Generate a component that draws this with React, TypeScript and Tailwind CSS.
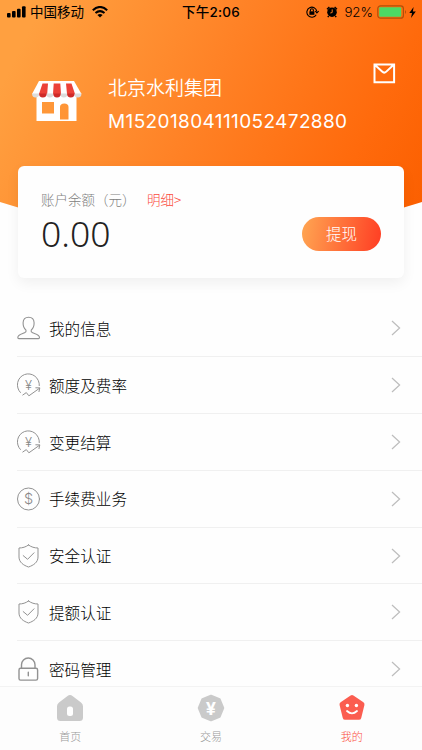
import type { ReactNode } from 'react';

const line = { fill: 'none', stroke: '#929292', strokeWidth: 1, strokeLinecap: 'round', strokeLinejoin: 'round' } as const;

function UserIcon() {
  return (
    <svg width="24" height="24" viewBox="0 0 24 24" {...line} strokeWidth={1.1}>
      <path d="M9 14.2C7.2 12.6 6 9.6 6.1 6.8C6.2 3.4 8.5 1.2 11.6 1.2S17 3.4 17.1 6.8C17.2 9.6 16 12.6 14.2 14.2C13.8 15.5 14.4 16.3 15.6 16.8C18.5 18 22.5 18.6 22.5 21.6Q22.5 22.6 21.5 22.6H1.8Q.8 22.6 .8 21.6C.8 18.6 4.8 18 7.6 16.8C8.8 16.3 9.4 15.5 9 14.2Z" />
    </svg>
  );
}

function RateIcon() {
  return (
    <svg width="24" height="24" viewBox="0 0 24 24" {...line}>
      <path d="M3.4 19.5A11 11 0 1 1 22.3 12.6M5.8 22L9.3 19.6L11.9 22.8L22.6 15.2M18.8 14.8L22.8 14.9L22 18.6" />
      <text x="11.5" y="16.5" textAnchor="middle" fontSize="13" fontFamily="Inter, sans-serif" fontWeight="300" fill="#888" stroke="none">¥</text>
    </svg>
  );
}

function DollarIcon() {
  return (
    <svg width="24" height="24" viewBox="0 0 24 24" {...line}>
      <circle cx="11.5" cy="12" r="11" />
      <text x="11.7" y="17.2" textAnchor="middle" fontSize="14.5" fontFamily="Inter, sans-serif" fontWeight="300" fill="#888" stroke="none">$</text>
    </svg>
  );
}

function ShieldIcon() {
  return (
    <svg width="24" height="24" viewBox="0 0 24 24" {...line}>
      <path d="M11.5 1C8.8 3 5.5 4 2 4V13C2 18.3 6.5 21.3 11.5 23C16.5 21.3 21 18.3 21 13V4C17.5 4 14.2 3 11.5 1Z" />
      <path d="M6.2 11.6L10.6 15.3L17 8.8" />
    </svg>
  );
}

function LockIcon() {
  return (
    <svg width="24" height="24" viewBox="0 0 24 24" {...line} strokeWidth={1.4}>
      <rect x="2" y="11.3" width="18.6" height="11.8" rx="1.6" />
      <path d="M4.5 11V7.7A6.7 6.7 0 0 1 18 7.7V11M11.3 15.3V18.7" />
    </svg>
  );
}

const menu: { label: string; icon: ReactNode }[] = [
  { label: '我的信息', icon: <UserIcon /> },
  { label: '额度及费率', icon: <RateIcon /> },
  { label: '变更结算', icon: <RateIcon /> },
  { label: '手续费业务', icon: <DollarIcon /> },
  { label: '安全认证', icon: <ShieldIcon /> },
  { label: '提额认证', icon: <ShieldIcon /> },
  { label: '密码管理', icon: <LockIcon /> },
];

function StatusBar() {
  return (
    <div className="grid h-6 grid-cols-[1fr_auto_1fr] items-center text-[13.5px] leading-6 text-black">
      <div className="flex items-center pl-[7px]">
        <svg width="19" height="12" viewBox="0 0 19 12">
          <rect x="0" y="7" width="3.6" height="4.5" rx="1" />
          <rect x="5" y="5" width="3.6" height="6.5" rx="1" />
          <rect x="10" y="2.7" width="3.6" height="8.8" rx="1" />
          <rect x="15" y="0.3" width="3.6" height="11.2" rx="1" />
        </svg>
        <span className="ml-1 h-6 leading-[23px]">中国移动</span>
        <svg className="ml-2" width="16" height="12" viewBox="0 0 16 12" fill="none" stroke="#000" strokeWidth="2.1">
          <path d="M.8 4.2Q8-2.2 15.2 4.2M3.5 7Q8 3.2 12.5 7" />
          <path d="M5.4 8.9Q8 6.9 10.6 8.9L8 11.6Z" fill="#000" stroke="none" />
        </svg>
      </div>
      <span className="font-['Inter','Noto_Sans_CJK_SC',sans-serif] text-[13.5px] font-medium tracking-[0.2px]">下午2:06</span>
      <div className="flex items-center justify-end pr-[6px]">
        <svg width="13" height="12" viewBox="0 0 13 12" fill="none" stroke="#000" strokeWidth="1.1">
          <path d="M10.2 8.7A5 5 0 1 1 10.8 5.4M9.2 5L10.9 6.9L12.6 5" />
          <rect x="3.4" y="5.3" width="5" height="3.5" fill="#000" stroke="none" />
          <path d="M4.4 5.5V4.3A1.5 1.5 0 0 1 7.4 4.3V5.5" />
        </svg>
        <svg className="ml-[7px]" width="12" height="12" viewBox="0 0 12 12">
          <circle cx="6" cy="6.2" r="4.8" />
          <path d="M1 3.2L3.4 1M8.6 1L11 3.2M2.7 10L1.8 11.2M9.3 10L10.2 11.2" stroke="#000" strokeWidth="1.4" />
          <path d="M6.2 3.4V6.5L4.3 7" stroke="#ff7c1c" fill="none" strokeWidth="1" />
        </svg>
        <span className="ml-[6px] font-['Inter',sans-serif] text-[13.3px] font-light">92%</span>
        <svg className="ml-1" width="30" height="14" viewBox="0 0 30 14">
          <rect x=".8" y=".8" width="25.6" height="12.4" rx="2.8" fill="none" stroke="#b0500a" strokeWidth="1.2" />
          <rect x="2.2" y="2.2" width="22" height="9.6" rx="1" fill="#4cd964" />
          <path d="M28 5Q30 7 28 9Z" fill="#b0500a" />
        </svg>
        <svg className="ml-[2px]" width="7" height="11" viewBox="0 0 7 11">
          <path d="M4.6 0L.3 6H3L2 11L6.8 4.5H3.9Z" />
        </svg>
      </div>
    </div>
  );
}

function ShopIcon() {
  return (
    <svg width="50" height="42" viewBox="0 0 50 42">
      <path d="M4.5 13H44.5V41H4.5ZM10 22V33.5H22V22ZM28 39.5H36.5V27Q36.5 23.5 32.3 23.5T28 27Z" fill="#fff" fillRule="evenodd" />
      <path d="M7 1H42L49.5 14H0Z" fill="#fff" />
      <path d="M10.5 3.5H16L15.2 14H7ZM21.7 3.5H28.3L29 14H21ZM34 3.5H39.5L43 14H35Z" fill="#ec4138" />
      <path d="M0 13.5H7.2A3.6 4 0 0 1 0 13.5M14.3 13.5H21.5A3.6 4 0 0 1 14.3 13.5M28.3 13.5H35.5A3.6 4 0 0 1 28.3 13.5M42.3 13.5H49.5A3.6 4 0 0 1 42.3 13.5" fill="#dcdcdc" />
      <path d="M7 13.5H14.7A3.85 4 0 0 1 7 13.5M21.2 13.5H28.8A3.8 4 0 0 1 21.2 13.5M35 13.5H42.6A3.8 4 0 0 1 35 13.5" fill="#cf2a28" />
    </svg>
  );
}

function Header() {
  return (
    <header className="h-[266px] bg-[linear-gradient(117deg,#ffa040_8%,#ff8226_45%,#ff6a0c_78%,#fb5f00_95%)] [clip-path:polygon(0_0,100%_0,100%_202px,50%_266px,0_202px)]">
      <StatusBar />
      <div className="flex items-start pt-[38px] pr-[26px] pl-8">
        <div className="mt-[18px]">
          <ShopIcon />
        </div>
        <div className="mt-[8px] ml-[26px] flex-1 text-white">
          <div className="text-[19px] leading-[34px] font-[350]">北京水利集团</div>
          <div className="font-['Inter',sans-serif] text-[19px] leading-[35px] tracking-[0.38px]">M15201804111052472880</div>
        </div>
        <svg className="mt-[1px]" width="23" height="21" viewBox="0 0 23 21" fill="none" stroke="#fff" strokeWidth="2">
          <path d="M1.5 1.5H21.1V19.3H1.5ZM2.3 2.3L9.1 8.6Q11.2 10.6 13.3 8.6L20.1 2.3" />
        </svg>
      </div>
    </header>
  );
}

function BalanceCard() {
  return (
    <section className="relative mx-[18px] -mt-[100.5px] flex h-28 rounded-md bg-[#fefefe] px-[23px] shadow-[0_5px_14px_rgba(0,0,0,0.06)]">
      <div className="flex-1 pt-[22px]">
        <div className="flex items-center text-[13.5px] leading-[22px] font-light">
          <span className="w-[95px] whitespace-nowrap text-[#808080]">账户余额（元）</span>
          <span className="ml-[11px] text-[#fb4a3c]">明细&gt;</span>
        </div>
        <div className="font-['Noto_Sans',sans-serif] text-[35.5px] leading-[47px] font-light text-[#222]">0.00</div>
      </div>
      <button className="mt-[51px] h-[34px] w-[79px] rounded-full bg-[linear-gradient(100deg,#ffa652,#ff3d23)] text-[15.5px] leading-[33px] font-light text-white">
        提现
      </button>
    </section>
  );
}

function TabBar() {
  return (
    <nav className="relative grid h-16 grid-cols-3 border-t border-[#f3f3f3] bg-[#fdfdfd] text-center text-[11px] leading-4 font-light text-[#999]">
      <div className="flex flex-col items-center pt-[7px]">
        <svg width="28" height="28" viewBox="0 0 28 28">
          <path d="M11.5 2Q14 .2 16.5 2L25 8.4Q27 9.8 27 12.2V23.5Q27 27 23.5 27H4.5Q1 27 1 23.5V12.2Q1 9.8 3 8.4Z" fill="#cacaca" />
          <rect x="11" y="12.5" width="6" height="9.5" rx="2.5" fill="#fff" />
        </svg>
        <span className="mt-[6px]">首页</span>
      </div>
      <div className="flex flex-col items-center pt-[7px]">
        <svg width="28" height="28" viewBox="0 0 28 28">
          <path d="M14 2L22.5 5.5L26 14L22.5 22.5L14 26L5.5 22.5L2 14L5.5 5.5Z" fill="#cacaca" stroke="#cacaca" strokeWidth="2.5" strokeLinejoin="round" />
          <text x="14" y="20.5" textAnchor="middle" fontFamily="Inter, sans-serif" fontWeight="700" fontSize="18" fill="#fff">¥</text>
        </svg>
        <span className="mt-[6px]">交易</span>
      </div>
      <div className="flex flex-col items-center pt-[7px] text-[#fb4d40]">
        <svg width="28" height="28" viewBox="0 0 28 28">
          <path d="M14 3.5L24 10.3L20.8 23.3H7.2L4 10.3Z" fill="#fb5d50" stroke="#fb5d50" strokeWidth="5" strokeLinejoin="round" />
          <circle cx="9.4" cy="11.5" r="1.7" fill="#fff" />
          <circle cx="18.4" cy="11.5" r="1.7" fill="#fff" />
          <path d="M9 17Q14 21.7 19 17" fill="none" stroke="#fff" strokeWidth="1.8" strokeLinecap="round" />
        </svg>
        <span className="mt-[6px]">我的</span>
      </div>
    </nav>
  );
}

export default function App() {
  return (
    <div className="flex h-[750px] w-[422px] flex-col overflow-hidden bg-[#fefefe] font-['Noto_Sans_CJK_SC',sans-serif]">
      <Header />
      <BalanceCard />
      <ul className="mt-[22.5px] min-h-0 flex-1 overflow-hidden pl-[17px]">
        {menu.map(item => (
          <li key={item.label} className="flex h-[56.9px] items-center border-b border-[#f0f0f0] pr-[21px]">
            {item.icon}
            <span className="ml-2 flex-1 pt-px text-[15.6px] font-light text-black">{item.label}</span>
            <svg width="10" height="16" viewBox="0 0 10 16" fill="none" stroke="#bdbdbd" strokeWidth="1.2">
              <path d="M1 1L8.6 8L1 15" />
            </svg>
          </li>
        ))}
      </ul>
      <TabBar />
    </div>
  );
}
